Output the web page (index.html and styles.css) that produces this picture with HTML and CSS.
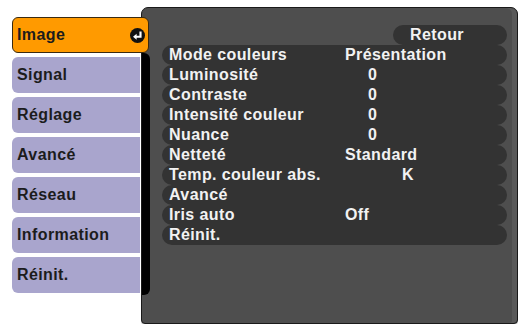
FILE: index.html
```html
<!DOCTYPE html>
<html>
<head>
  <title>Image</title>
  <link rel="stylesheet" href="styles.css">
</head>
<body>
  <div class="screen">
    <div class="tabs">
      <div class="tab tab-active">
        <span>Image</span>
        <svg class="enter-icon" width="15" height="15" viewBox="0 0 14 14">
          <circle cx="7" cy="7" r="7" fill="#111"/>
          <path d="M9.8 3.2 V8.2 H5.5" stroke="#fff" stroke-width="2" fill="none"/>
          <path d="M2.8 8.2 L6.2 5.4 L6.2 11 Z" fill="#fff"/>
        </svg>
      </div>
      <div class="tab">Signal</div>
      <div class="tab">Réglage</div>
      <div class="tab">Avancé</div>
      <div class="tab">Réseau</div>
      <div class="tab">Information</div>
      <div class="tab">Réinit.</div>
    </div>

    <div class="panel">
      <div class="strip"></div>
      <div class="menu">
        <div class="back-row">
          <div class="back-button">Retour</div>
        </div>
        <div class="row"><span class="label">Mode couleurs</span><span class="value">Présentation</span></div>
        <div class="row"><span class="label">Luminosité</span><span class="value num">0</span></div>
        <div class="row"><span class="label">Contraste</span><span class="value num">0</span></div>
        <div class="row"><span class="label">Intensité couleur</span><span class="value num">0</span></div>
        <div class="row"><span class="label">Nuance</span><span class="value num">0</span></div>
        <div class="row"><span class="label">Netteté</span><span class="value">Standard</span></div>
        <div class="row"><span class="label">Temp. couleur abs.</span><span class="value unit">K</span></div>
        <div class="row"><span class="label">Avancé</span><span class="value"></span></div>
        <div class="row"><span class="label">Iris auto</span><span class="value">Off</span></div>
        <div class="row"><span class="label">Réinit.</span><span class="value"></span></div>
      </div>
    </div>
  </div>
</body>
</html>
```

FILE: styles.css
```css
body {
  margin: 0;
  background-color: #fff;
  font-family: "Liberation Sans", Arial, sans-serif;
  font-size: 16px;
  font-weight: bold;
  letter-spacing: 0.4px;
}

.screen {
  display: flex;
  padding-top: 7px;
}

.tabs {
  display: flex;
  flex-direction: column;
  gap: 4px;
  width: 128px;
  padding-top: 10px;
  padding-left: 12px;
}

.tab {
  display: flex;
  align-items: center;
  justify-content: space-between;
  height: 36px;
  padding-left: 5px;
  padding-right: 6px;
  color: #1c1c1c;
  background-color: #a9a5cd;
  border-radius: 6px 0 0 6px;
  box-sizing: border-box;
}

.tab-active {
  position: relative;
  z-index: 1;
  margin-right: -9px;
  padding-left: 4px;
  padding-right: 3px;
  background-color: #ff9a00;
  border: 1px solid #3a2a10;
  border-radius: 6px;
}

.enter-icon {
  display: block;
}

.panel {
  display: flex;
  width: 377px;
  height: 317px;
  margin-left: 1px;
  background-color: #4e4e4e;
  border: 1px solid #1a1a1a;
  border-radius: 7px 7px 4px 4px;
  box-shadow: inset -5px 0 0 #5a5a5a, 0 1px 0 #c8c8c8;
  box-sizing: border-box;
}

.strip {
  width: 8px;
  height: 242px;
  margin-top: 45px;
  background-color: #000;
  border-radius: 0 6px 6px 0;
}

.menu {
  flex: 1;
  padding: 17px 10px 0 12px;
  color: #f2f2f2;
}

.back-row {
  display: flex;
  justify-content: flex-end;
}

.back-button {
  width: 114px;
  height: 20px;
  line-height: 20px;
  padding-left: 17px;
  background-color: #333;
  border-radius: 10px;
  box-sizing: border-box;
}

.row {
  display: flex;
  height: 20px;
  line-height: 20px;
  padding-left: 7px;
  background-color: #333;
  border-radius: 10px;
}

.label {
  width: 176px;
}

.value.num {
  padding-left: 23px;
}

.value.unit {
  padding-left: 57px;
}
```
